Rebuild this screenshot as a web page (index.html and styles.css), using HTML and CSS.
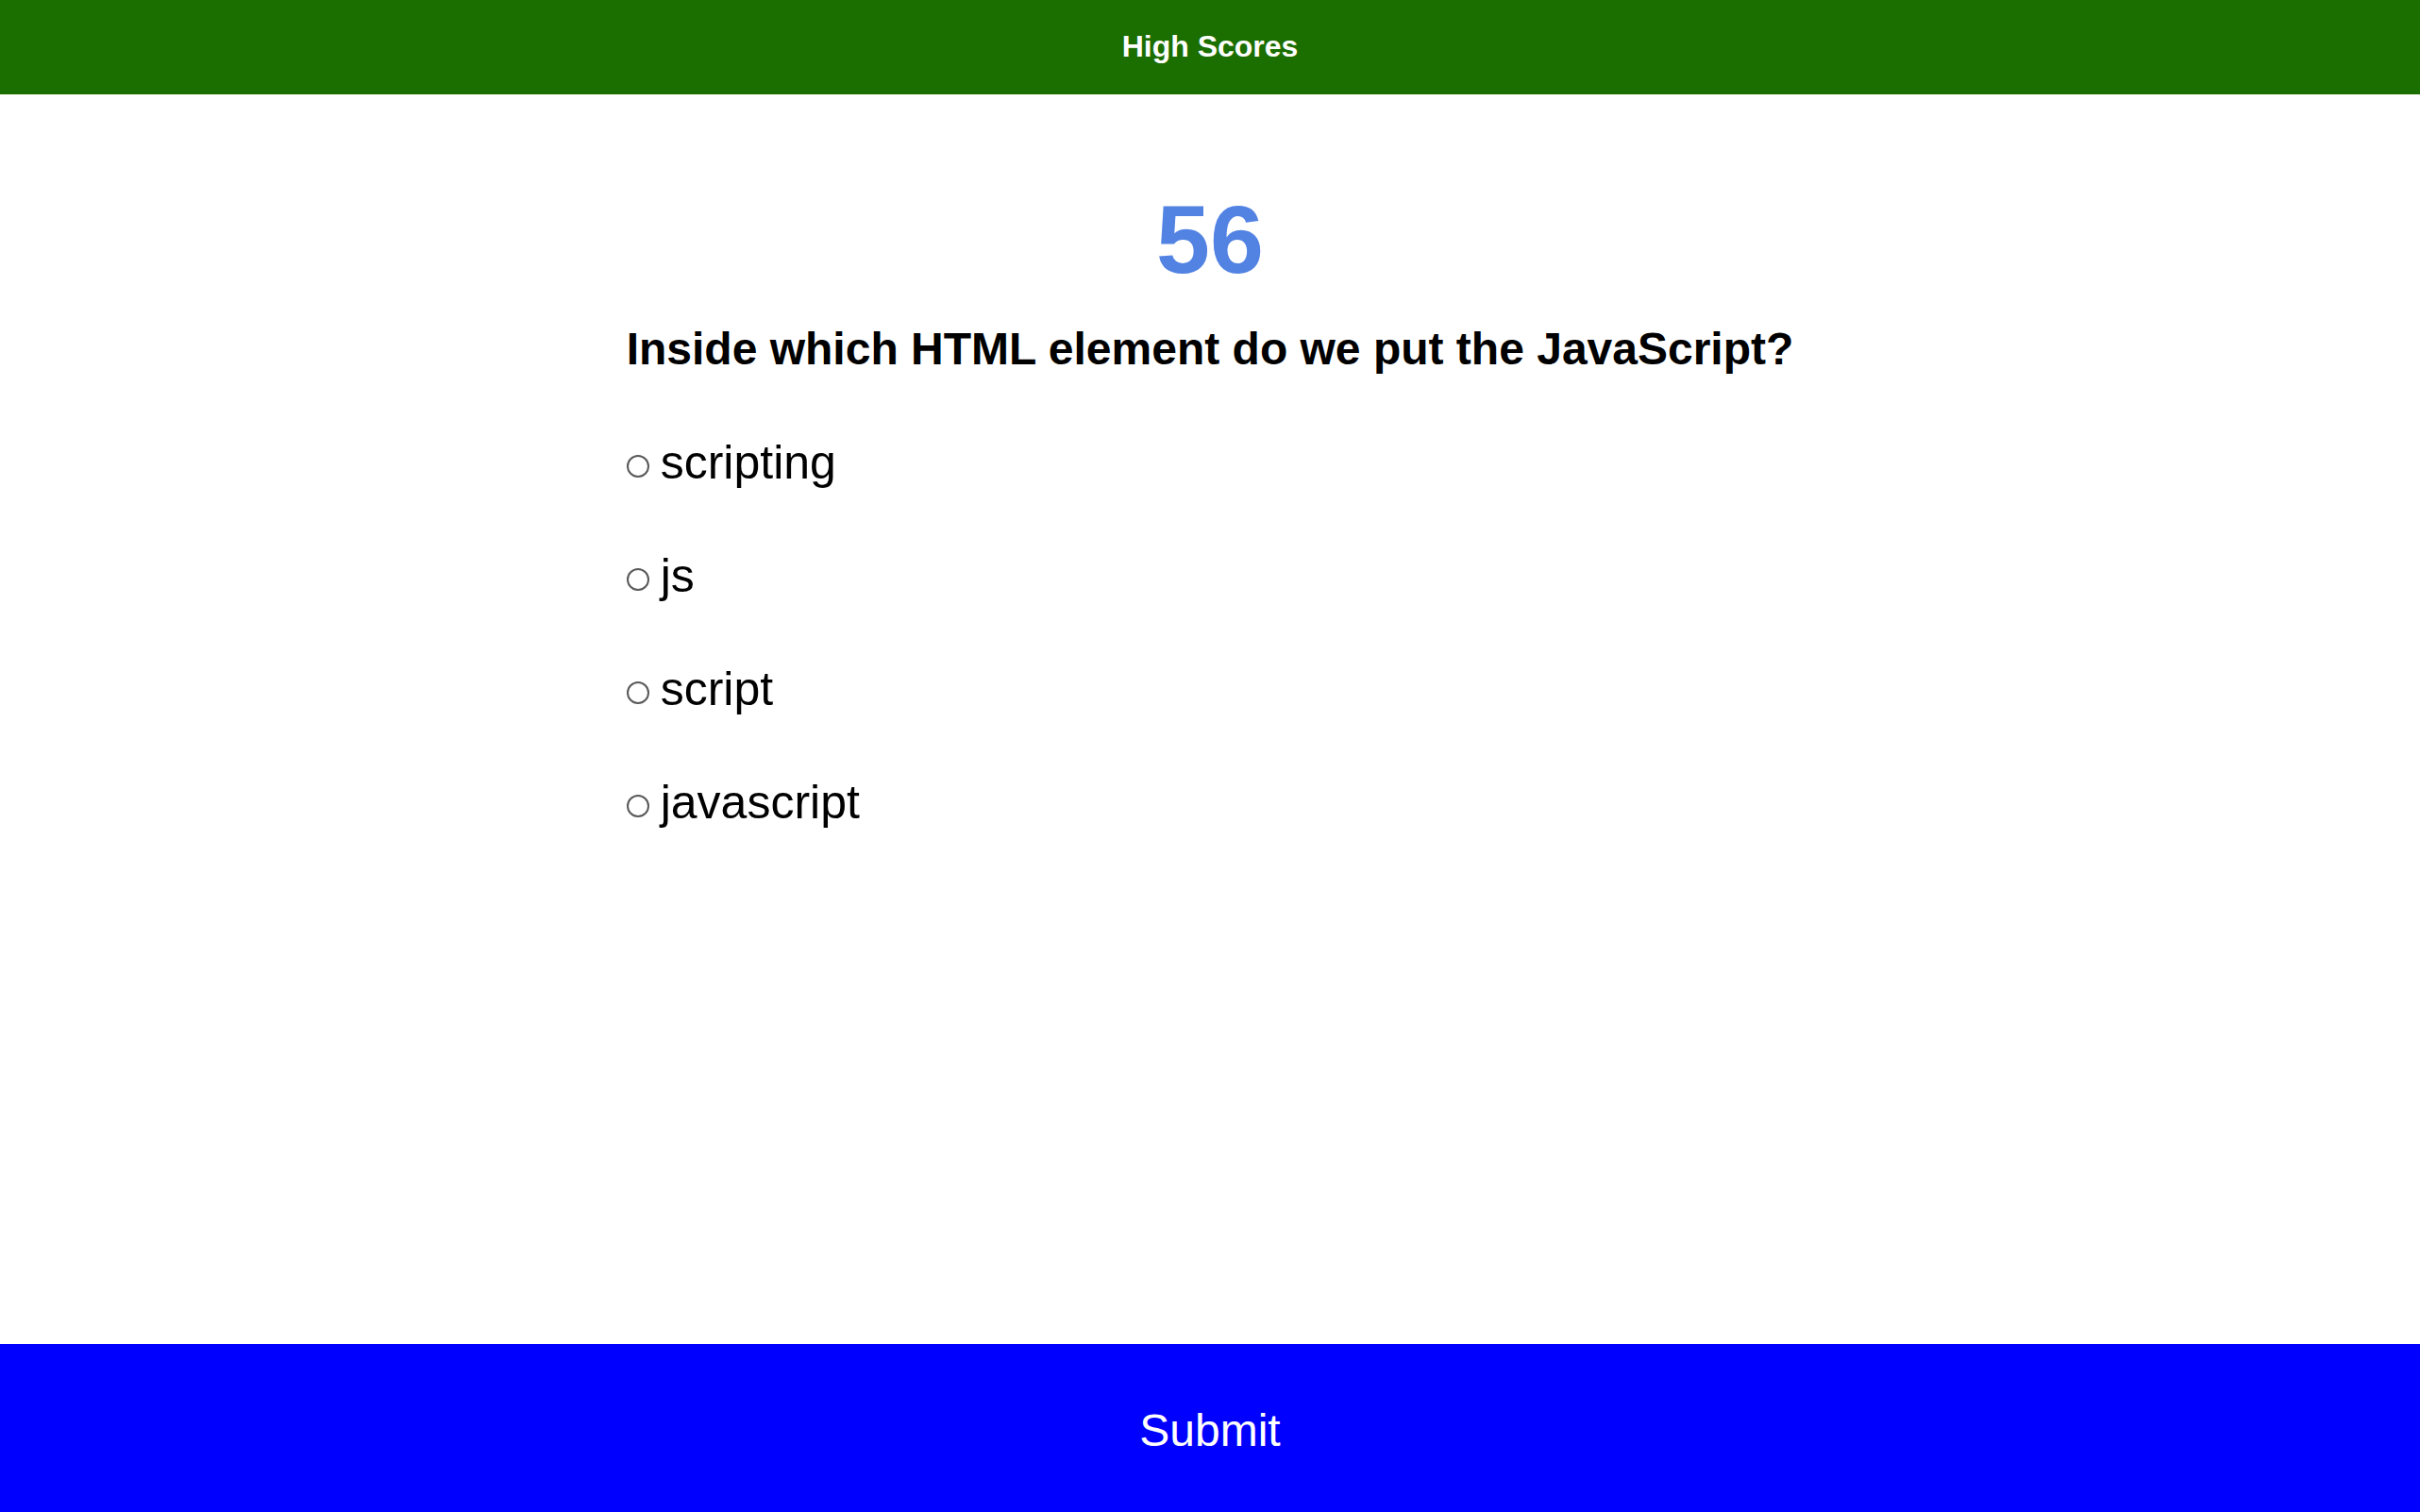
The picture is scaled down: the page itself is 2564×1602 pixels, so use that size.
FILE: index.html
```html
<!DOCTYPE html>
<html lang="en">
<head>
<meta charset="utf-8">
<title>Quiz</title>
<link rel="stylesheet" href="styles.css">
</head>
<body>
<header class="topbar">
  <a class="topbar-link" href="#">High Scores</a>
</header>
<main class="quiz">
  <div class="score">56</div>
  <h2 class="question">Inside which HTML element do we put the JavaScript?</h2>
  <form class="options">
    <label class="option"><input type="radio" name="answer" class="radio"><span>scripting</span></label>
    <label class="option"><input type="radio" name="answer" class="radio"><span>js</span></label>
    <label class="option"><input type="radio" name="answer" class="radio"><span>script</span></label>
    <label class="option"><input type="radio" name="answer" class="radio"><span>javascript</span></label>
  </form>
</main>
<button class="submit" type="button">Submit</button>
</body>
</html>
```

FILE: styles.css
```css
html, body {
  margin: 0;
  padding: 0;
}
body {
  font-family: "Liberation Sans", Arial, sans-serif;
  background: #ffffff;
  color: #000000;
  min-height: 100vh;
  display: flex;
  flex-direction: column;
}
.topbar {
  height: 100px;
  box-sizing: border-box;
  padding-bottom: 2px;
  background: #1b6e00;
  display: flex;
  align-items: center;
  justify-content: center;
}
.topbar-link {
  color: #ffffff;
  font-weight: bold;
  font-size: 32px;
  text-decoration: none;
}
.quiz {
  width: fit-content;
  margin: 0 auto;
  padding-top: 94px;
  display: flex;
  flex-direction: column;
}
.score {
  text-align: center;
  font-weight: bold;
  font-size: 102.4px;
  line-height: 120px;
  height: 120px;
  color: #5283e3;
}
.question {
  margin: 28px 0 0 0;
  font-size: 48px;
  line-height: 56px;
  font-weight: bold;
}
.options {
  margin-top: 64px;
  display: flex;
  flex-direction: column;
  gap: 64px;
}
.option {
  display: flex;
  align-items: center;
  font-size: 50px;
  line-height: 56px;
}
.radio {
  appearance: none;
  -webkit-appearance: none;
  width: 24px;
  height: 24px;
  margin: 8px 12px 0 0;
  border: 2px solid #595959;
  border-radius: 50%;
  background: #ffffff;
  box-sizing: border-box;
  flex: none;
}
.submit {
  margin-top: auto;
  width: 100%;
  height: 178px;
  border: none;
  background: #0000ff;
  color: #ffffff;
  font-family: "Liberation Sans", Arial, sans-serif;
  font-size: 48px;
  padding: 4px 0 0 0;
}
```
